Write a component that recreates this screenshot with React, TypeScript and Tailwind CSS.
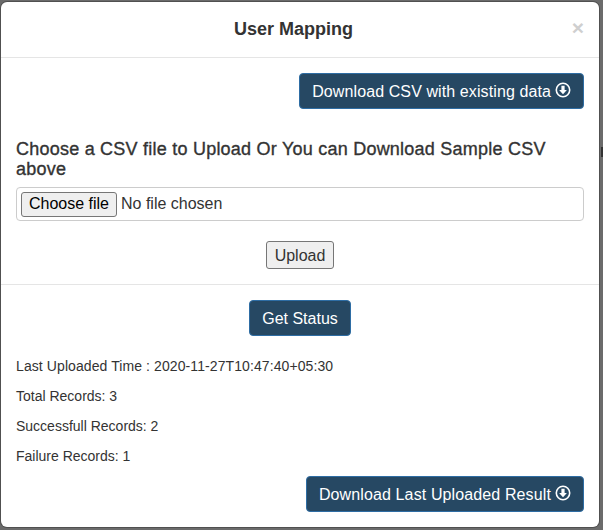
import React from 'react';

function DownloadIcon() {
  return (
    <svg viewBox="0 0 16 16" className="w-[16px] h-[16px] ml-[4px] mt-[-3px] inline-block shrink-0">
      <circle cx="8" cy="8" r="6.7" fill="none" stroke="currentColor" strokeWidth="1.6" />
      <path d="M6.4 3.8h3.2v4.1h2.3L8 12.2 4.100 7.900h2.300z" fill="currentColor" />
    </svg>
  );
}

function PrimaryButton({ children }: { children: React.ReactNode }) {
  return (
    <button className="h-[36px] px-[12px] pt-[1px] flex items-center bg-[#264863] border border-[#2e6da4] rounded-[4px] text-white text-[16px] leading-none whitespace-nowrap">
      {children}
    </button>
  );
}

export default function App() {
  return (
    <div className="relative w-[603px] h-[530px] bg-[#6b6b6b] pl-[1px] pr-[4px] pt-[2px] pb-[3px] font-['Liberation_Sans',Arial,sans-serif] overflow-hidden">
      <span className="absolute right-0 top-[147px] w-[2px] h-[10px] bg-[#333333]" />
      <div className="h-full bg-white rounded-[6px] shadow-[0_0_0_1px_rgba(0,0,0,0.25)] flex flex-col text-[#333333]">
        <div className="h-[56px] border-b border-[#e5e5e5] flex items-center justify-center relative shrink-0">
          <h4 className="text-[18px] font-bold leading-none mt-[-1px] mr-[13px]">User Mapping</h4>
          <span className="absolute right-[15px] top-[15px] text-[21px] font-bold leading-none text-[#cfcfcf]">×</span>
        </div>

        <div className="px-[15px] flex flex-col flex-1">
          <div className="flex justify-end mt-[15px]">
            <PrimaryButton>
              <span className="tracking-[0.1px]">Download CSV with existing data</span>
              <DownloadIcon />
            </PrimaryButton>
          </div>

          <h4 className="mt-[30px] text-[18px] leading-[20px] text-[#333333] tracking-[0.23px] [-webkit-text-stroke:0.35px_#333333]">
            Choose a CSV file to Upload Or You can Download Sample CSV above
          </h4>

          <div className="mt-[8px] h-[34px] border border-[#cccccc] rounded-[4px] flex items-center pl-[4px]">
            <button className="h-[25px] w-[96px] bg-[#efefef] border border-[#767676] rounded-[3px] text-[16px] text-black leading-none">
              Choose file
            </button>
            <span className="ml-[4px] text-[16px] text-[#333333]">No file chosen</span>
          </div>

          <div className="flex justify-center mt-[20px]">
            <button className="h-[28px] w-[68px] pt-[1px] bg-[#efefef] border border-[#767676] rounded-[3px] text-[16px] text-[#333333] leading-none">
              Upload
            </button>
          </div>

          <div className="mx-[-15px] mt-[15px] border-t border-[#e5e5e5]" />

          <div className="flex justify-center mt-[15px]">
            <PrimaryButton>Get Status</PrimaryButton>
          </div>

          <div className="mt-[20px] flex flex-col gap-[10px] text-[14px] leading-[20px] text-[#333333]">
            <p className="tracking-[0.09px]">Last Uploaded Time : 2020-11-27T10:47:40+05:30</p>
            <p>Total Records: 3</p>
            <p>Successfull Records: 2</p>
            <p>Failure Records: 1</p>
          </div>

          <div className="flex justify-end mt-[10px]">
            <PrimaryButton>
              <span className="tracking-[0.12px]">Download Last Uploaded Result</span>
              <DownloadIcon />
            </PrimaryButton>
          </div>
        </div>
      </div>
    </div>
  );
}
